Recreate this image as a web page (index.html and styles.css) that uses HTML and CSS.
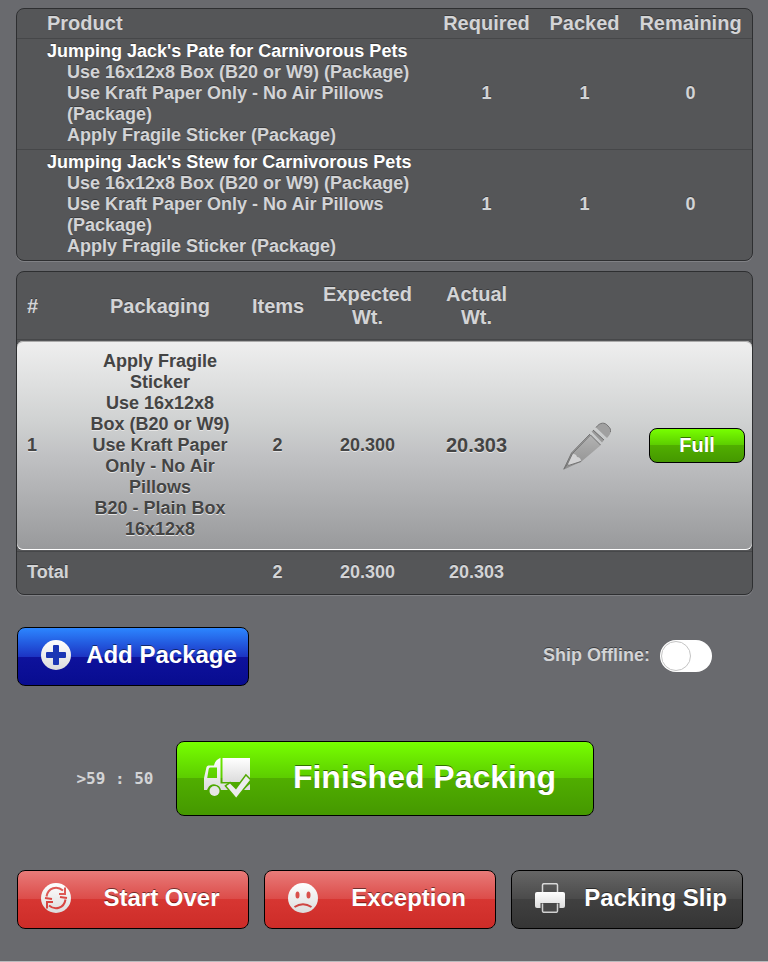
FILE: index.html
```html
<!DOCTYPE html>
<html lang="en">
<head>
    <meta charset="UTF-8">
    <meta name="viewport" content="width=device-width, initial-scale=1.0">
    <title>Packing</title>
    <link rel="stylesheet" href="styles.css">
</head>
<body>

    <!-- gradients shared by the icons -->
    <svg class="defs" width="0" height="0" aria-hidden="true">
        <defs>
            <linearGradient id="icon-fill" x1="0" y1="0" x2="0" y2="1">
                <stop offset="0" stop-color="#ffffff"/>
                <stop offset="1" stop-color="#dcdcdc"/>
            </linearGradient>
            <linearGradient id="pencil-fill" x1="0" y1="0" x2="0" y2="1">
                <stop offset="0" stop-color="#b4b4b4"/>
                <stop offset="1" stop-color="#8e8e8e"/>
            </linearGradient>
        </defs>
    </svg>

    <main class="page">
        <table class="panel products">
            <colgroup>
                <col>
                <col class="col-required">
                <col class="col-packed">
                <col class="col-remaining">
            </colgroup>
            <thead>
                <tr>
                    <th class="product">Product</th>
                    <th>Required</th>
                    <th>Packed</th>
                    <th>Remaining</th>
                </tr>
            </thead>
            <tbody>
                <tr>
                    <td class="product">
                        <div class="product-name">Jumping Jack's Pate for Carnivorous Pets</div>
                        <ul>
                            <li>Use 16x12x8 Box (B20 or W9) (Package)</li>
                            <li>Use Kraft Paper Only - No Air Pillows (Package)</li>
                            <li>Apply Fragile Sticker (Package)</li>
                        </ul>
                    </td>
                    <td>1</td>
                    <td>1</td>
                    <td>0</td>
                </tr>
                <tr>
                    <td class="product">
                        <div class="product-name">Jumping Jack's Stew for Carnivorous Pets</div>
                        <ul>
                            <li>Use 16x12x8 Box (B20 or W9) (Package)</li>
                            <li>Use Kraft Paper Only - No Air Pillows (Package)</li>
                            <li>Apply Fragile Sticker (Package)</li>
                        </ul>
                    </td>
                    <td>1</td>
                    <td>1</td>
                    <td>0</td>
                </tr>
            </tbody>
        </table>

        <table class="panel packages">
            <colgroup>
                <col class="col-number">
                <col>
                <col class="col-items">
                <col class="col-weight">
                <col class="col-weight">
                <col class="col-edit">
                <col class="col-full">
            </colgroup>
            <thead>
                <tr>
                    <th class="left">#</th>
                    <th>Packaging</th>
                    <th>Items</th>
                    <th>Expected Wt.</th>
                    <th>Actual Wt.</th>
                    <th></th>
                    <th></th>
                </tr>
            </thead>
            <tbody>
                <tr>
                    <td class="left">1</td>
                    <td>
                        <div>Apply Fragile Sticker</div>
                        <div>Use 16x12x8 Box (B20 or W9)</div>
                        <div>Use Kraft Paper Only - No Air Pillows</div>
                        <div>B20 - Plain Box 16x12x8</div>
                    </td>
                    <td>2</td>
                    <td>20.300</td>
                    <td class="actual">20.303</td>
                    <td>
                        <button type="button" class="edit" aria-label="Edit weight">
                            <svg width="48" height="48" viewBox="0 0 48 48">
                                <path d="M0 48 L8.5 31 L27 12 L38 23 L18.5 39.5 Z" fill="url(#pencil-fill)"/>
                                <path d="M9.5 32 C12 31.5 14 33 14 35 C16 35 18 36.5 18 39 L6.5 43.5 L4.5 41.5 Z" fill="#d2d2d3"/>
                                <path d="M27 12 L8.5 31 L1 47 L4.5 42 L9.5 31.5 L27.5 13 L37.5 23" fill="none" stroke="#747474"/>
                                <path d="M5.5 43.5 L18 39.5" fill="none" stroke="#747474"/>
                                <path d="M28.5 9.5 L30.5 8 L41 18 L39 20.5 Z" fill="#999"/>
                                <path d="M30 8 L41 18" stroke="#6f6f6f"/>
                                <path d="M33 5.500 C37 0 42 0 45 4 C49 7.5 49 11 44 16 Z" fill="#a0a0a0"/>
                                <path d="M33 5.500 C37 0 42 0 45 4 C47.5 6 48 8.5 47.5 10" fill="none" stroke="#747474"/>
                            </svg>
                        </button>
                    </td>
                    <td class="full-cell"><button type="button" class="btn btn-green btn-small">Full</button></td>
                </tr>
            </tbody>
            <tfoot>
                <tr>
                    <td class="left" colspan="2">Total</td>
                    <td>2</td>
                    <td>20.300</td>
                    <td>20.303</td>
                    <td></td>
                    <td></td>
                </tr>
            </tfoot>
        </table>

        <div class="row package-row">
            <button type="button" class="btn btn-blue">
                <svg width="30" height="30" viewBox="0 0 30 30">
                    <circle cx="15" cy="15" r="15" fill="url(#icon-fill)"/>
                    <path d="M13 5 h4 q1 0 1 1 v6 h6 q1 0 1 1 v4 q0 1 -1 1 h-6 v6 q0 1 -1 1 h-4 q-1 0 -1 -1 v-6 h-6 q-1 0 -1 -1 v-4 q0 -1 1 -1 h6 v-6 q0 -1 1 -1 z" fill="#1b36b4"/>
                </svg>
                <span>Add Package</span>
            </button>
            <div class="offline">
                <label for="ship-offline">Ship Offline:</label>
                <input type="checkbox" id="ship-offline" class="switch">
            </div>
        </div>

        <div class="finish-row">
            <div class="timer">&gt;59 : 50</div>
            <button type="button" class="btn btn-green btn-large">
                <svg width="46" height="41" viewBox="0 0 46 41">
                    <path d="M18.5 1 H46 V25 H18.5 Z" fill="url(#icon-fill)"/>
                    <path fill-rule="evenodd" d="M0 33 V21 L2.5 10 Q3 8.5 4.5 8.5 H10 Q11 3 16.5 0.7 V26.5 H24 V33 H17 A7 7 0 0 0 4 31 L3 33 Z M3.2 21 H13 V10.5 H6 Q5 10.5 4.7 12 Z" fill="url(#icon-fill)"/>
                    <circle cx="10.5" cy="34" r="5" fill="#e6e6e6"/>
                    <path d="M46 27 V33 H39 Z" fill="#dedede"/>
                    <path d="M22.5 29 L26 26.5 L32 32.5 L42 19 L46 23 L32.2 40.5 Z" fill="#ececec" stroke="#50a800" stroke-width="3" paint-order="stroke"/>
                </svg>
                <span>Finished Packing</span>
            </button>
        </div>

        <div class="row bottom-row">
            <button type="button" class="btn btn-red">
                <svg width="30" height="30" viewBox="0 0 30 30">
                    <circle cx="15" cy="15" r="15" fill="url(#icon-fill)"/>
                    <path d="M5.5 13.5 C7 4.5 16 2.5 22 7.5 M24 4.5 V11 H18" fill="none" stroke="#dd5a56" stroke-width="2"/>
                    <path d="M24.5 16.5 C23 25.5 14 27.5 8 22.5 M6 25.5 V19 H12" fill="none" stroke="#d84541" stroke-width="2"/>
                    <path d="M4 15 L11 16 M19 14 L26 15" stroke="#da4a46" stroke-width="2"/>
                </svg>
                <span>Start Over</span>
            </button>
            <button type="button" class="btn btn-red">
                <svg width="30" height="30" viewBox="0 0 30 30">
                    <circle cx="15" cy="15" r="15" fill="url(#icon-fill)"/>
                    <ellipse cx="9.5" cy="12" rx="2" ry="3.5" fill="#d9504c"/>
                    <ellipse cx="20.5" cy="12" rx="2" ry="3.5" fill="#d9504c"/>
                    <path d="M6.5 24 Q15 18.5 23.5 24" fill="none" stroke="#cf4541" stroke-width="2"/>
                </svg>
                <span>Exception</span>
            </button>
            <button type="button" class="btn btn-dark">
                <svg width="30" height="30" viewBox="0 0 30 30">
                    <path d="M7.5 9 V2 Q7.5 0.7 9 0.7 H21 Q22.5 0.7 22.5 2 V9" fill="none" stroke="#d8d8d8" stroke-width="1.5"/>
                    <path d="M2 9 H28 Q30 9 30 11 V23 Q30 25 28 25 H2 Q0 25 0 23 V11 Q0 9 2 9 Z" fill="url(#icon-fill)"/>
                    <path d="M5.5 20 H24.5 V26 H5.5 Z" fill="#484848"/>
                    <path d="M7.500 20.5 V28 Q7.5 29.3 9 29.3 H21 Q22.5 29.3 22.5 28 V20.5" fill="#484848" stroke="#d0d0d0" stroke-width="1.5"/>
                </svg>
                <span>Packing Slip</span>
            </button>
        </div>
    </main>

</body>
</html>
```
FILE: styles.css
```css
*,
*::before {
    box-sizing: border-box;
}

html {
    background-color: #b9babd;
}

body {
    margin: 0;
    font-family: "Liberation Sans", Arial, sans-serif;
    font-size: 18px;
    font-weight: bold;
    line-height: 21px;
    color: #d3d4d6;
    text-shadow: 0 -1px 0 #3c3d3f;
}

.defs {
    display: block;
}

.page {
    min-height: calc(100vh - 1px);
    padding: 8px 15px 32px 16px;
    background-color: #696a6e;
}

/* tables */
.panel {
    width: 100%;
    margin-bottom: 10px;
    table-layout: fixed;
    border-collapse: separate;
    border-spacing: 0;
    border: 1px solid #2e2f31;
    border-radius: 8px;
    background-color: #555658;
    box-shadow: 0 1px 0 #808185;
}

.panel th,
.panel td {
    text-align: center;
    vertical-align: middle;
}

.panel th {
    font-size: 20px;
    line-height: 23px;
}

.panel .left {
    text-align: left;
}

.products th {
    padding: 3px 0;
}

.products td {
    padding: 2px 0 3px;
    border-top: 1px solid #464749;
}

.products .product {
    padding-left: 30px;
    padding-right: 10px;
    text-align: left;
}

.product-name {
    color: #fff;
}

.products ul {
    margin: 0;
    padding: 0 0 0 20px;
    list-style: none;
}

.col-required {
    width: 107px;
}

.col-packed {
    width: 89px;
}

.col-remaining {
    width: 123px;
}

.packages {
    border-spacing: 0 1px;
}

.packages th,
.packages td {
    padding: 10px;
}

.packages th {
    border-bottom: 1px solid #464749;
}

.packages tfoot td {
    border-top: 1px solid #464749;
}

.packages tbody td {
    color: #444;
    text-shadow: 0 1px 0 #e6e6e6;
    background-image: linear-gradient(#efefef, #d0d2d2 38%, #c0c1c3 55%, #98999b);
    box-shadow: inset 0 1px 0 #aaa, inset 0 -1px 0 #fff;
}

.packages tbody td:first-child {
    border-radius: 6px 0 0 6px;
}

.packages tbody td:last-child {
    border-radius: 0 6px 6px 0;
}

.packages .actual {
    font-size: 20px;
}

.packages .full-cell {
    padding: 0 7px 0 6px;
}

.col-number {
    width: 61px;
}

.col-items {
    width: 71px;
}

.col-weight {
    width: 109px;
}

.col-edit {
    width: 112px;
}

.col-full {
    width: 109px;
}

.edit {
    display: block;
    margin: 0 auto;
    padding: 0;
    border: none;
    background: none;
    cursor: pointer;
}

.edit svg {
    display: block;
}

/* buttons */
.btn {
    display: flex;
    align-items: center;
    gap: 4px;
    width: 232px;
    height: 59px;
    padding: 0 0 3px 23px;
    border: 1px solid #000;
    border-radius: 8px;
    font-family: inherit;
    font-size: 24px;
    font-weight: bold;
    color: #fff;
    text-shadow: 0 -1px 0 rgba(0, 0, 0, 0.5);
    cursor: pointer;
}

.btn span {
    flex: 1;
}

.btn svg {
    flex: none;
}

.btn-blue {
    background-image: linear-gradient(#2c86ff, #1c35c4 50%, #0e129c 50%, #080c90);
}

.btn-green {
    background-image: linear-gradient(#77ff00, #5ccc00 50%, #50ae00 50%, #459800);
}

.btn-red {
    background-image: linear-gradient(#e87b79, #dc4b48 50%, #d73632 50%, #cd2c28);
}

.btn-dark {
    background-image: linear-gradient(#666, #4a4a4a 50%, #404040 50%, #353535);
}

.btn-small {
    display: block;
    width: 100%;
    height: 35px;
    padding: 0;
    font-size: 20px;
}

.btn-large {
    gap: 7px;
    width: 100%;
    height: 75px;
    padding: 0 0 3px 27px;
    font-size: 32px;
}

.row {
    display: flex;
    align-items: center;
    gap: 15px;
    padding: 0 1px;
}

.package-row {
    justify-content: space-between;
    margin-top: 32px;
    padding-right: 41px;
}

.offline {
    display: flex;
    align-items: center;
    gap: 10px;
    padding-bottom: 2px;
}

.switch {
    appearance: none;
    width: 52px;
    height: 32px;
    margin: 0;
    padding: 1px;
    border-radius: 16px;
    background-color: #fff;
    cursor: pointer;
}

.switch::before {
    content: "";
    display: block;
    width: 30px;
    height: 30px;
    border: 1px solid #c4c4c4;
    border-radius: 50%;
    background-color: #fff;
}

.switch:checked::before {
    margin-left: auto;
}

.finish-row {
    display: grid;
    grid-template-columns: 1fr 418px 1fr;
    align-items: center;
    margin-top: 55px;
}

.timer {
    padding-right: 22px;
    font-family: "DejaVu Sans Mono", Consolas, monospace;
    font-size: 16px;
    text-align: right;
    text-shadow: none;
    white-space: nowrap;
}

.bottom-row {
    margin-top: 54px;
}
```
